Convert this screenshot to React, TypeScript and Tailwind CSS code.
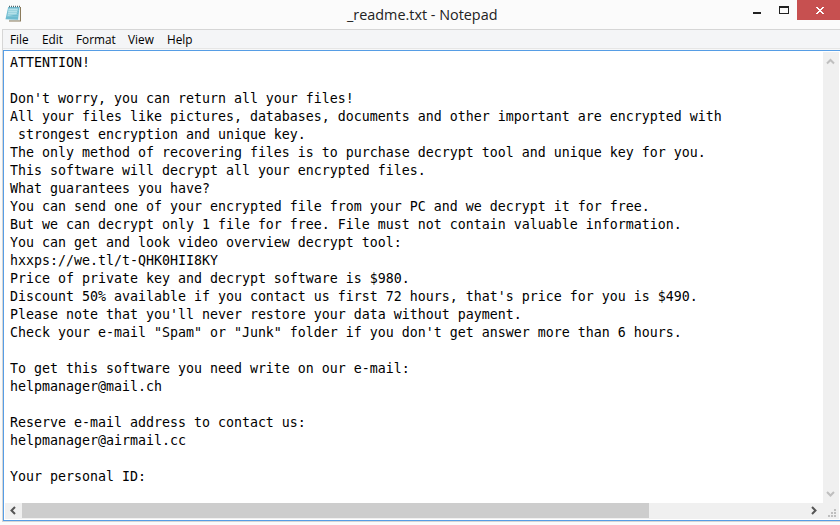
const MENU = [
  { label: "File", width: "w-[18px]" },
  { label: "Edit", width: "w-[20px]" },
  { label: "Format", width: "w-[38px]" },
  { label: "View", width: "w-[25px]" },
  { label: "Help", width: "w-[25px]" },
]

const NOTE = `ATTENTION!

Don't worry, you can return all your files!
All your files like pictures, databases, documents and other important are encrypted with
 strongest encryption and unique key.
The only method of recovering files is to purchase decrypt tool and unique key for you.
This software will decrypt all your encrypted files.
What guarantees you have?
You can send one of your encrypted file from your PC and we decrypt it for free.
But we can decrypt only 1 file for free. File must not contain valuable information.
You can get and look video overview decrypt tool:
hxxps://we.tl/t-QHK0HII8KY
Price of private key and decrypt software is $980.
Discount 50% available if you contact us first 72 hours, that's price for you is $490.
Please note that you'll never restore your data without payment.
Check your e-mail "Spam" or "Junk" folder if you don't get answer more than 6 hours.

To get this software you need write on our e-mail:
helpmanager@mail.ch

Reserve e-mail address to contact us:
helpmanager@airmail.cc

Your personal ID:`

function NotepadIcon() {
  return (
    <svg width="18" height="18" viewBox="0 0 18 18" className="mt-[5px] ml-[5px] shrink-0">
      <path d="M4 2h12v14.5H4z" fill="#8b7b5c" />
      <path d="M3.5 2h11.5v13.4H4z" fill="#e4eef0" />
      <path d="M3.200 2h11.300l-1.500 12.800L.5 14.200z" fill="#6dbbd0" />
      <path d="M3.500 3.500h9.500l-1.500 6L2.500 11z" fill="#b4e0e9" />
      <path d="M3.2 5.500h10.600M2.800 7.500h10.600M2.400 9.500h10.600M2 11.500h10.600" stroke="#8ccbd9" strokeWidth=".6" />
      <path d="M4 1.500h12" stroke="#536a70" strokeWidth="1.600" strokeDasharray="1 1" />
    </svg>
  )
}

function TitleBar() {
  return (
    <div className="flex h-[29px] shrink-0 bg-[#fbfbfb]">
      <NotepadIcon />
      <div className="flex-1 pl-[324px] font-['Open_Sans','Noto_Sans',sans-serif] text-[14.4px] leading-[29px] whitespace-nowrap text-[#222]">
        _readme.txt - Notepad
      </div>
      <svg width="87" height="20" viewBox="0 0 87 20" shapeRendering="crispEdges" className="shrink-0">
        <path d="M0 12h8v2H0z" fill="#222" />
        <path d="M26 6h10v8H26zM27 8v5h8V8z" fill="#222" fillRule="evenodd" />
        <path d="M44 0h43v20H44z" fill="#c75050" />
        <path
          d="M63 7h2v1h1v1h2V8h1V7h2v1h-1v1h-1v1h-1v1h1v1h1v1h1v1h-2v-1h-1v-1h-2v1h-1v1h-2v-1h1v-1h1v-1h1v-1h-1V9h-1V8h-1z"
          fill="#fff"
        />
      </svg>
    </div>
  )
}

function MenuBar() {
  return (
    <div className="flex h-[18px] shrink-0 gap-[14px] bg-[#f4f5f7] pl-[7px] font-['Open_Sans','Noto_Sans',sans-serif] text-[11.8px] leading-[19px] text-black">
      {MENU.map((item) => (
        <span key={item.label} className={`${item.width} whitespace-nowrap`}>
          {item.label}
        </span>
      ))}
    </div>
  )
}

function VerticalScrollbar() {
  return (
    <div className="flex w-4 shrink-0 flex-col justify-between bg-[#f0f0f0]">
      <svg width="16" height="18" viewBox="0 0 16 18">
        <path d="M4 11.500L7.500 8l3.500 3.500" fill="none" stroke="#bfbfbf" strokeWidth="2" />
      </svg>
      <svg width="16" height="18" viewBox="0 0 16 18">
        <path d="M4 7l3.500 3.500L11 7" fill="none" stroke="#bfbfbf" strokeWidth="2" />
      </svg>
    </div>
  )
}

function HorizontalScrollbar() {
  return (
    <div className="flex h-4 shrink-0 bg-[#f0f0f0]">
      <svg width="17" height="15" viewBox="0 0 17 15">
        <path d="M10 4L6.500 7.500L10 11" fill="none" stroke="#555" strokeWidth="2" />
      </svg>
      <div className="h-[15px] w-[627px] bg-[#cdcdcd]" />
      <div className="flex-1" />
      <svg width="17" height="15" viewBox="0 0 17 15">
        <path d="M6 4l3.500 3.500L6 11" fill="none" stroke="#555" strokeWidth="2" />
      </svg>
      <svg width="16" height="15" viewBox="0 0 16 15" shapeRendering="crispEdges">
        <path d="M11 6h2v2h-2zM8 9h2v2H8zM11 9h2v2h-2zM5 12h2v2H5zM8 12h2v2H8zM11 12h2v2h-2z" fill="#bfbfbf" />
      </svg>
    </div>
  )
}

export default function App() {
  return (
    <div className="flex h-[525px] w-[840px] flex-col overflow-hidden bg-[#fbfbfb]">
      <TitleBar />
      <div className="ml-[2px] flex h-[493px] flex-col border-t border-b border-l border-[#d6d6d6]">
        <MenuBar />
        <div className="h-px shrink-0 bg-[#e6e6e6]" />
        <div className="h-px shrink-0 bg-[#f8f8f8]" />
        <div className="flex flex-1 flex-col border-t border-b border-l border-[#569de5] bg-white pt-px pr-px pl-px">
          <div className="flex min-h-0 flex-1">
            <pre className="m-0 flex-1 overflow-hidden pt-[2px] pl-[5px] font-['DejaVu_Sans_Mono',monospace] text-[13.29px] leading-[18px] text-black">
              {NOTE}
            </pre>
            <VerticalScrollbar />
          </div>
          <HorizontalScrollbar />
          <div className="h-px shrink-0" />
        </div>
      </div>
    </div>
  )
}
